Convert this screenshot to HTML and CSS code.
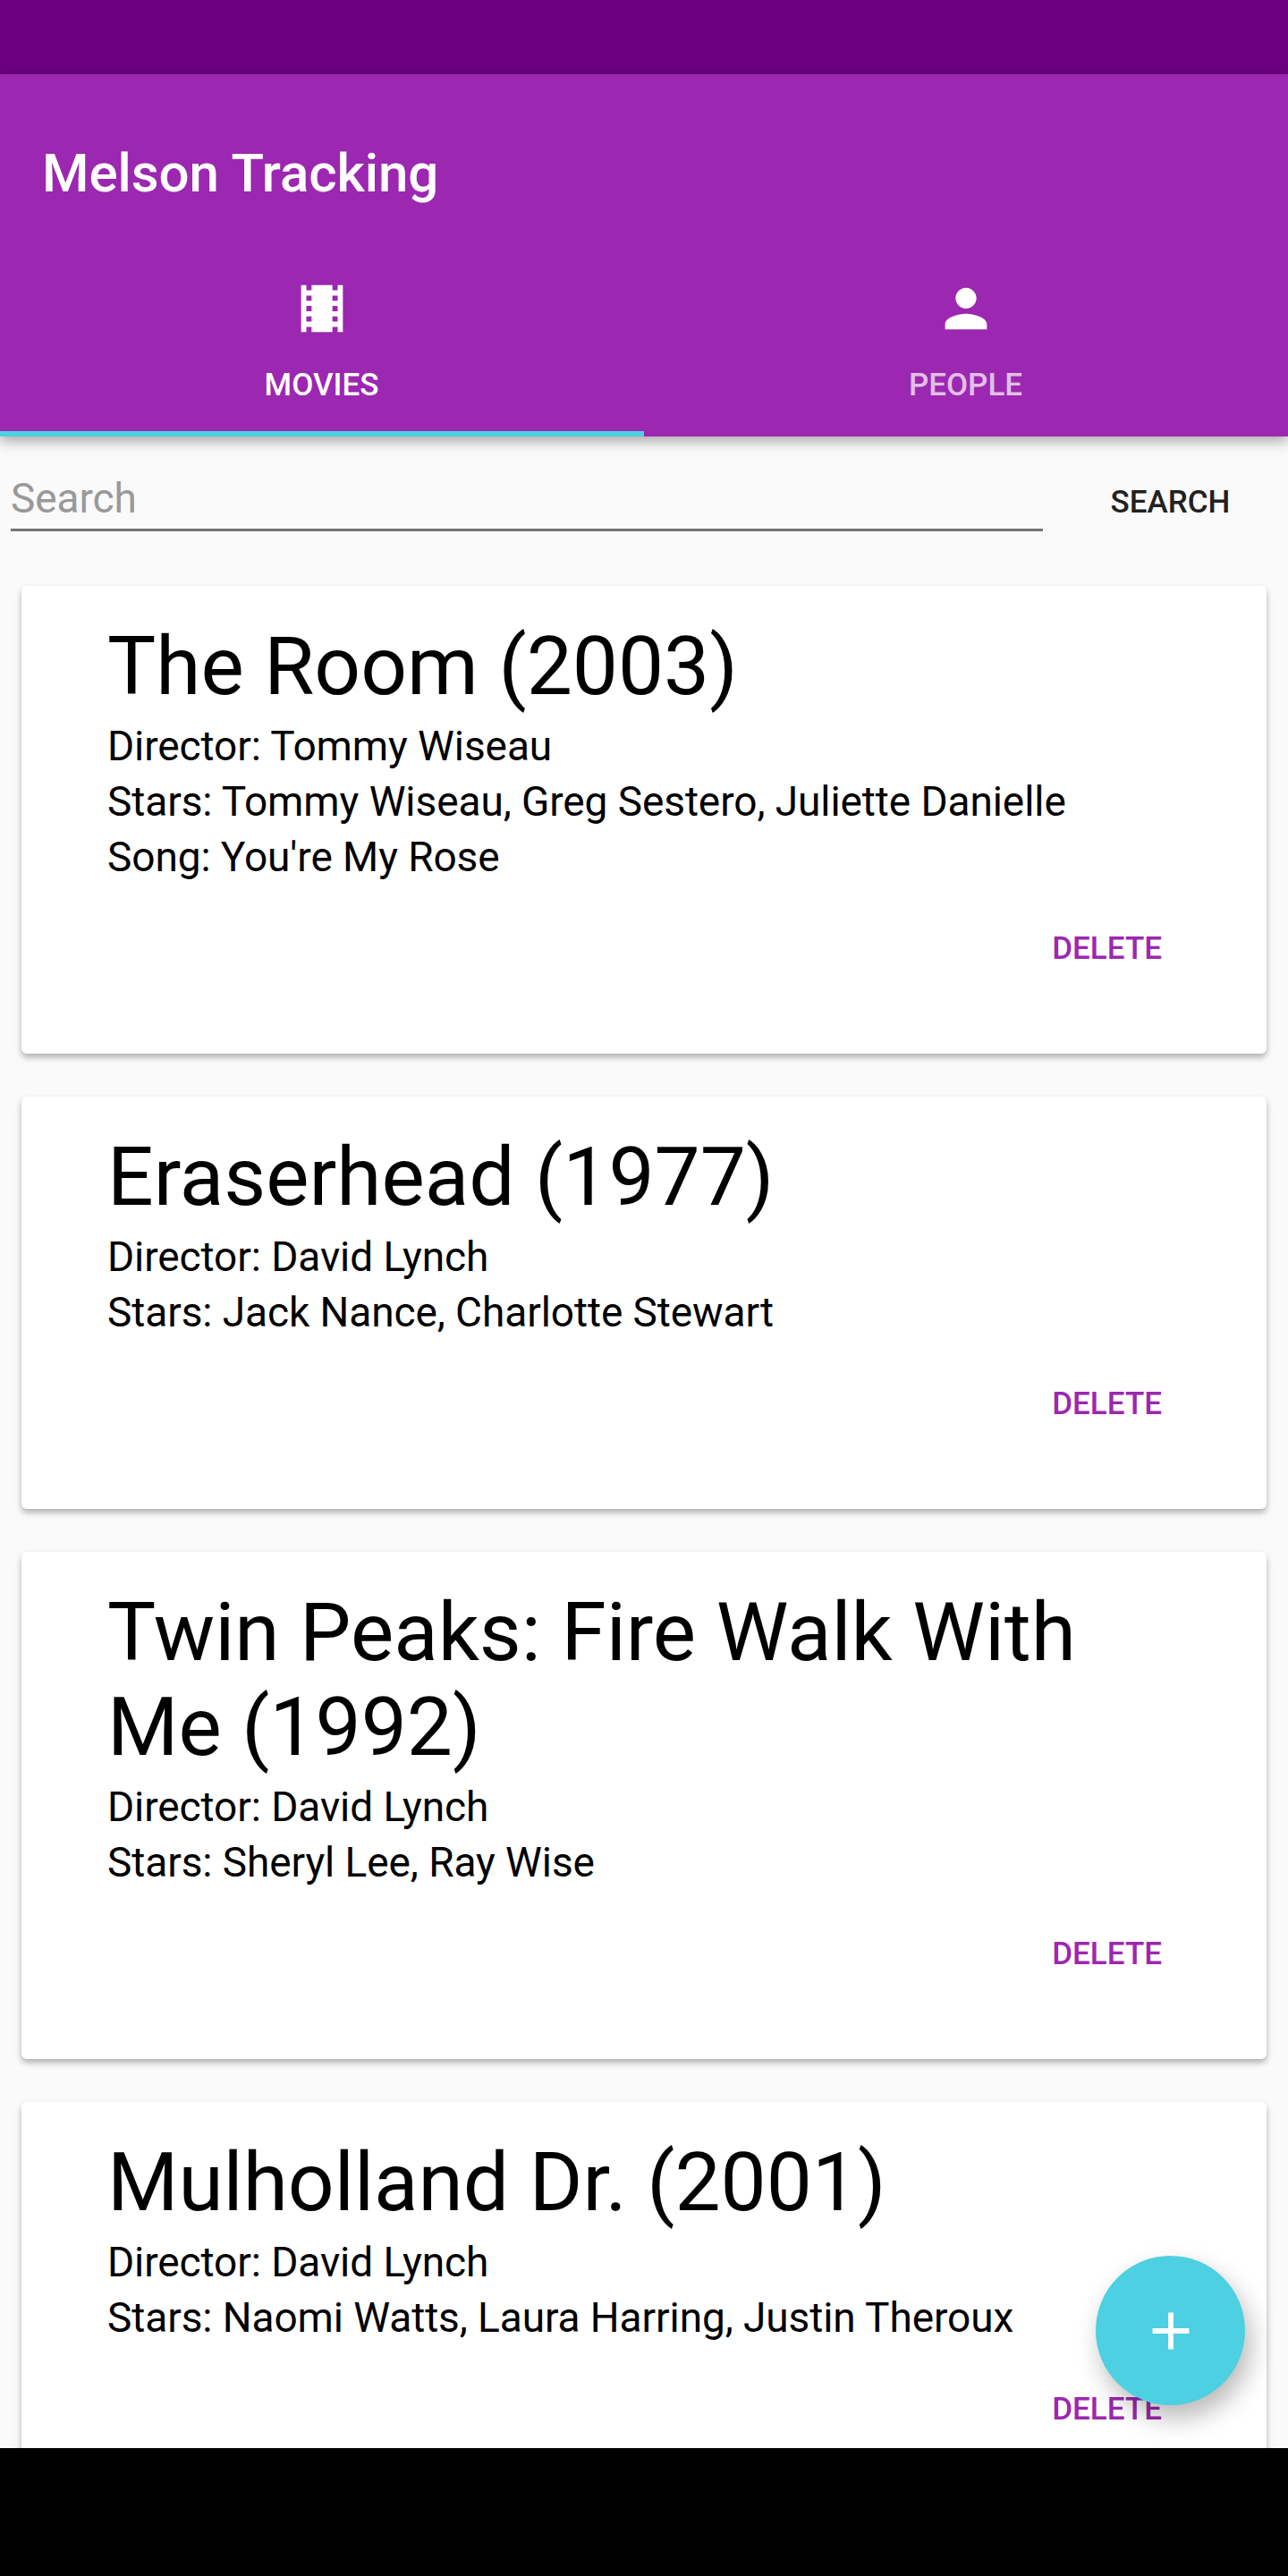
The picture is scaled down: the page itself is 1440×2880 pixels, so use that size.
FILE: index.html
```html
<!DOCTYPE html>
<html lang="en">
<head>
<meta charset="utf-8">
<title>Melson Tracking</title>
<link rel="stylesheet" href="styles.css">
</head>
<body>
<div class="screen">
  <div class="status"></div>
  <header class="appbar">
    <h1 class="title">Melson Tracking</h1>
    <nav class="tabs">
      <div class="tab active">
        <svg class="icon" viewBox="0 0 24 24"><path d="M18 3v2h-2V3H8v2H6V3H4v18h2v-2h2v2h8v-2h2v2h2V3h-2zM8 17H6v-2h2v2zm0-4H6v-2h2v2zm0-4H6V7h2v2zm10 8h-2v-2h2v2zm0-4h-2v-2h2v2zm0-4h-2V7h2v2z"/></svg>
        <span class="label">MOVIES</span>
      </div>
      <div class="tab">
        <svg class="icon" viewBox="0 0 24 24"><path d="M12 12c2.21 0 4-1.79 4-4s-1.79-4-4-4-4 1.79-4 4 1.79 4 4 4zm0 2c-2.67 0-8 1.34-8 4v2h16v-2c0-2.66-5.33-4-8-4z"/></svg>
        <span class="label">PEOPLE</span>
      </div>
    </nav>
  </header>
  <main class="content">
    <div class="search">
      <div class="field">Search</div>
      <div class="search-button">SEARCH</div>
    </div>
    <section class="card">
      <h2 class="movie">The Room (2003)</h2>
      <p class="line">Director: Tommy Wiseau</p>
      <p class="line">Stars: Tommy Wiseau, Greg Sestero, Juliette Danielle</p>
      <p class="line">Song: You're My Rose</p>
      <div class="delete">DELETE</div>
    </section>
    <section class="card">
      <h2 class="movie">Eraserhead (1977)</h2>
      <p class="line">Director: David Lynch</p>
      <p class="line">Stars: Jack Nance, Charlotte Stewart</p>
      <div class="delete">DELETE</div>
    </section>
    <section class="card">
      <h2 class="movie">Twin Peaks: Fire Walk With Me (1992)</h2>
      <p class="line">Director: David Lynch</p>
      <p class="line">Stars: Sheryl Lee, Ray Wise</p>
      <div class="delete">DELETE</div>
    </section>
    <section class="card">
      <h2 class="movie">Mulholland Dr. (2001)</h2>
      <p class="line">Director: David Lynch</p>
      <p class="line">Stars: Naomi Watts, Laura Harring, Justin Theroux</p>
      <div class="delete">DELETE</div>
    </section>
    <div class="fab"><svg class="plus" viewBox="0 0 24 24"><path d="M19 13h-6v6h-2v-6H5v-2h6V5h2v6h6v2z"/></svg></div>
  </main>
  <div class="navbar"></div>
</div>
</body>
</html>
```
FILE: styles.css
```css
* { box-sizing: border-box; }
body { margin: 0; font-family: Roboto, sans-serif; color: #000; }
h1, h2, p { margin: 0; font-weight: 400; }
.screen { width: 1440px; height: 2880px; display: flex; flex-direction: column; overflow: hidden; background: #fafafa; }
.status { height: 83px; flex: none; background: #6a0080; }
.appbar { height: 405px; flex: none; background: #9c27b0; color: #fff; display: flex; flex-direction: column; position: relative; z-index: 2; box-shadow: 0 5px 14px rgba(0,0,0,.34); }
.title { height: 221px; padding-left: 47px; font-size: 60px; font-weight: 500; line-height: 221px; letter-spacing: -.05px; }
.tabs { display: flex; flex: 1; }
.tab { flex: 1; display: flex; flex-direction: column; align-items: center; gap: 29px; padding: 6px 1px 0 0; border-bottom: 6px solid transparent; }
.tab.active { border-bottom-color: #4dd0e1; }
.icon { width: 70px; height: 70px; fill: #fff; }
.label { font-size: 35px; font-weight: 500; line-height: 44px; opacity: .7; }
.active .label { opacity: 1; }
.content { flex: 1; min-height: 0; overflow: hidden; position: relative; }
.search { height: 167px; display: flex; }
.field { width: 1154px; height: 69px; margin: 37px 0 0 12px; border-bottom: 3px solid #757575; font-size: 46px; line-height: 64px; letter-spacing: -.08px; color: #999; }
.search-button { flex: 1; padding-left: 11px; text-align: center; font-size: 35px; font-weight: 500; line-height: 147px; color: #212121; }
.card { margin: 0 24px 48px; padding: 37px 117px 95px 96px; background: #fff; border-radius: 6px; box-shadow: 0 4px 7px rgba(0,0,0,.3); }
.movie { margin-bottom: 5px; font-size: 91px; line-height: 106px; }
.line { font-size: 46px; line-height: 62px; letter-spacing: -.08px; }
.delete { margin-top: 50px; text-align: right; font-size: 35px; line-height: 44px; font-weight: 500; color: #9c27b0; }
.fab { position: absolute; left: 1225px; top: 2034px; width: 167px; height: 167px; border-radius: 50%; background: #4dd0e1; display: flex; align-items: center; justify-content: center; box-shadow: 6px 14px 28px rgba(0,0,0,.28); }
.plus { width: 70px; height: 70px; fill: #fff; }
.navbar { height: 143px; flex: none; background: #000; }
```
